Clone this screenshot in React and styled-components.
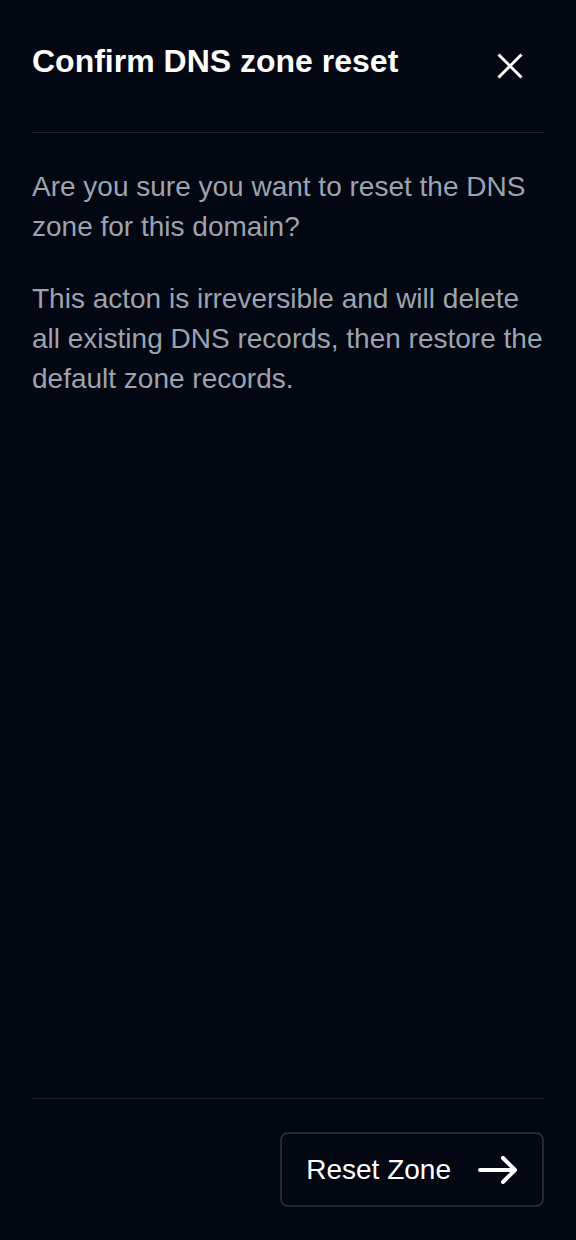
import React from "react";
import styled, { createGlobalStyle } from "styled-components";

const GlobalStyle = createGlobalStyle`
  html, body {
    margin: 0;
    padding: 0;
    background: #030712;
  }
  * { box-sizing: border-box; }
`;

const Panel = styled.div`
  min-height: 1240px;
  display: flex;
  flex-direction: column;
  padding: 0 32px;
  background: #030712;
  font-family: "Liberation Sans", Arial, sans-serif;
`;

const Header = styled.header`
  display: flex;
  align-items: flex-start;
  justify-content: space-between;
  padding: 41px 0 46px;
  border-bottom: 1px solid #1a202c;
`;

const Title = styled.h2`
  margin: 0;
  font-size: 32px;
  line-height: 40px;
  font-weight: 700;
  color: #ffffff;
`;

const CloseButton = styled.button`
  display: flex;
  align-items: center;
  justify-content: center;
  width: 40px;
  height: 40px;
  margin: 5px 14px 0 0;
  padding: 0;
  border: none;
  background: transparent;
  color: #ffffff;
  cursor: pointer;
`;

const Body = styled.div`
  flex: 1;
  padding-top: 34px;
`;

const Paragraph = styled.p`
  margin: 0 0 32px;
  font-size: 28px;
  line-height: 40px;
  color: #9ca3af;
`;

const Footer = styled.footer`
  display: flex;
  justify-content: flex-end;
  padding: 33px 0 33px;
  border-top: 1px solid #1a202c;
`;

const ActionButton = styled.button`
  display: flex;
  align-items: center;
  gap: 27px;
  height: 75px;
  padding: 0 24px;
  border: 2px solid #1f2937;
  border-radius: 8px;
  background: transparent;
  color: #ffffff;
  font-family: "Liberation Sans", Arial, sans-serif;
  font-size: 28px;
  cursor: pointer;
`;

const CloseIcon = () => (
  <svg width="26" height="26" viewBox="0 0 26 26" fill="none" stroke="currentColor" strokeWidth="3">
    <path d="M1.5 1.5L24.5 24.5M24.5 1.5L1.5 24.5" />
  </svg>
);

const ArrowIcon = () => (
  <svg width="40" height="28" viewBox="0 0 40 28" fill="none" stroke="currentColor" strokeWidth="4" strokeLinecap="round" strokeLinejoin="round">
    <path d="M2 14H37M25 2L37 14L25 26" />
  </svg>
);

export default function App() {
  return (
    <>
      <GlobalStyle />
      <Panel>
        <Header>
          <Title>Confirm DNS zone reset</Title>
          <CloseButton aria-label="Close">
            <CloseIcon />
          </CloseButton>
        </Header>
        <Body>
          <Paragraph>Are you sure you want to reset the DNS zone for this domain?</Paragraph>
          <Paragraph>
            This acton is irreversible and will delete all existing DNS records, then restore the default zone records.
          </Paragraph>
        </Body>
        <Footer>
          <ActionButton>
            Reset Zone
            <ArrowIcon />
          </ActionButton>
        </Footer>
      </Panel>
    </>
  );
}
